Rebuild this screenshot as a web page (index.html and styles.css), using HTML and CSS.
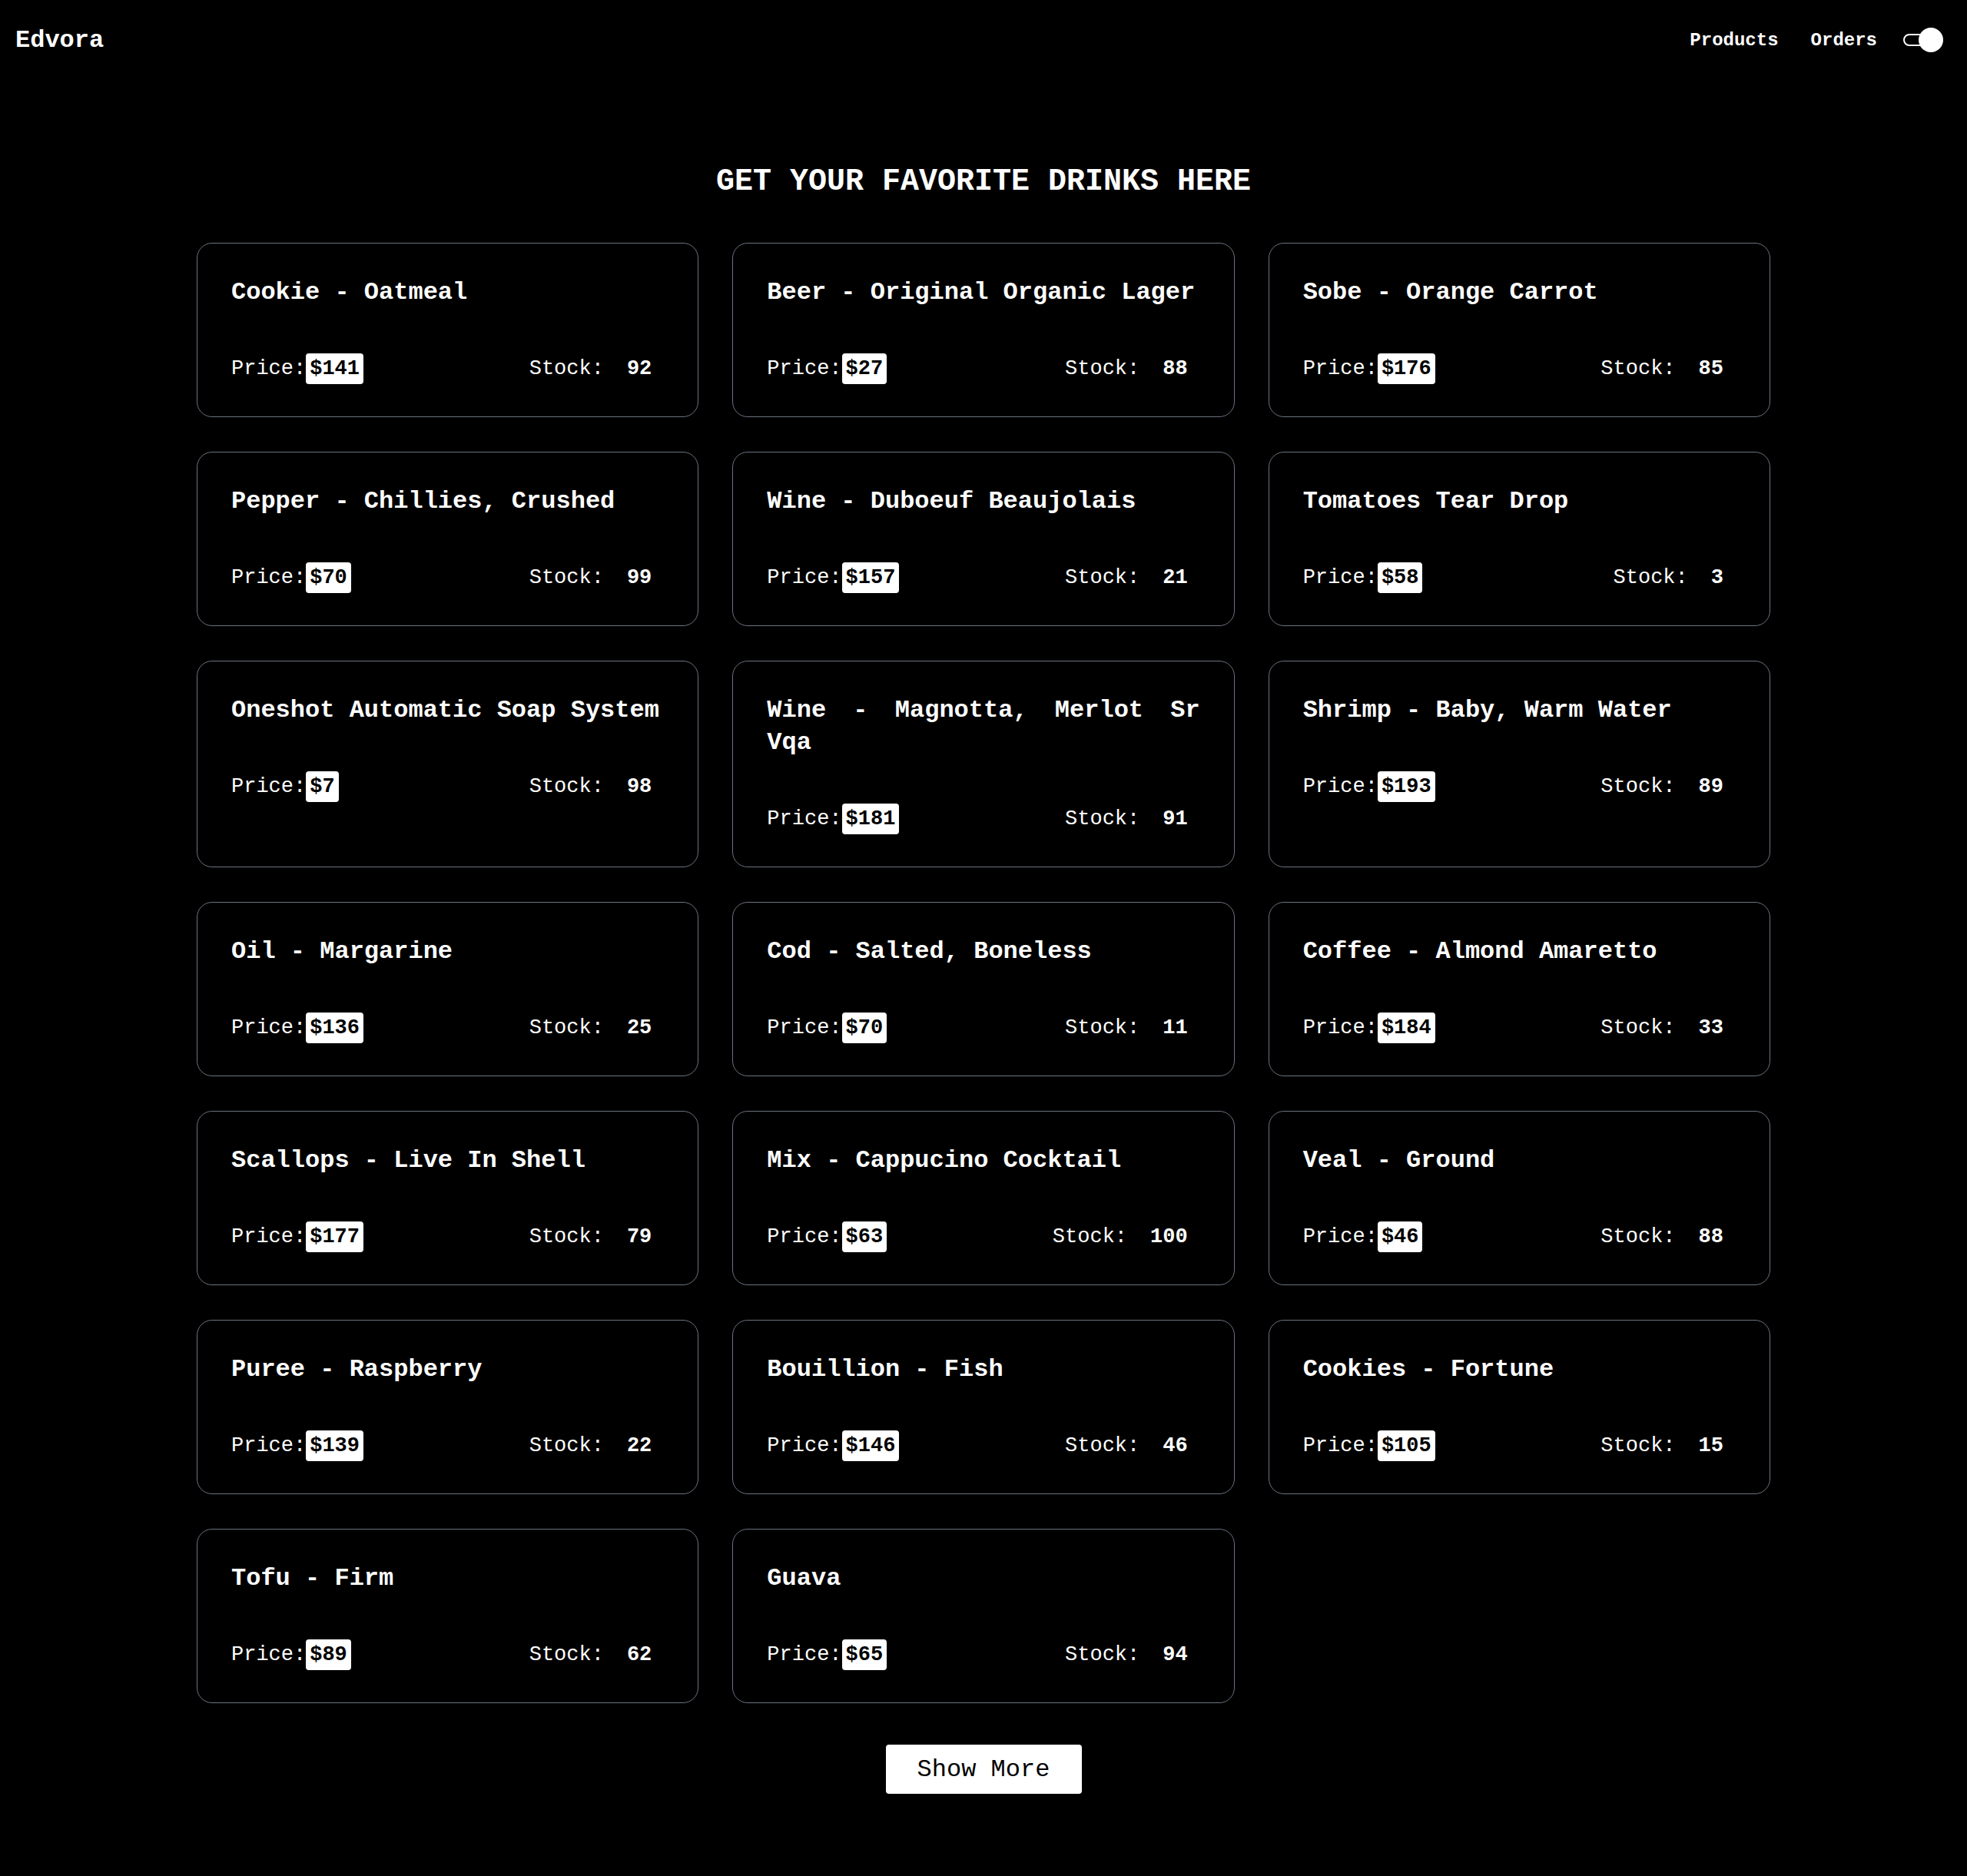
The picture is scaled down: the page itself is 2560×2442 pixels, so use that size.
FILE: index.html
```html
<!DOCTYPE html>
<html lang="en">
<head>
<meta charset="utf-8">
<title>Edvora</title>
<link rel="stylesheet" href="styles.css">
</head>
<body>
<header class="topbar">
  <div class="brand">Edvora</div>
  <nav class="nav">
    <a class="nav-link nav-products">Products</a>
    <a class="nav-link nav-orders">Orders</a>
    <svg class="toggle" width="52" height="32" viewBox="0 0 52 32">
      <rect x="1" y="9" width="40" height="14" rx="7" fill="none" stroke="#fff" stroke-width="2"/>
      <circle cx="36" cy="16" r="16" fill="#fff"/>
    </svg>
  </nav>
</header>

<main class="main">
  <h1 class="page-title">GET YOUR FAVORITE DRINKS HERE</h1>
  <section class="grid">
    <article class="card"><h2 class="card-title">Cookie - Oatmeal</h2><div class="card-row"><div class="price">Price:<span class="badge">$141</span></div><div class="stock">Stock:<span class="stock-val">92</span></div></div></article>
    <article class="card"><h2 class="card-title">Beer - Original Organic Lager</h2><div class="card-row"><div class="price">Price:<span class="badge">$27</span></div><div class="stock">Stock:<span class="stock-val">88</span></div></div></article>
    <article class="card"><h2 class="card-title">Sobe - Orange Carrot</h2><div class="card-row"><div class="price">Price:<span class="badge">$176</span></div><div class="stock">Stock:<span class="stock-val">85</span></div></div></article>
    <article class="card"><h2 class="card-title">Pepper - Chillies, Crushed</h2><div class="card-row"><div class="price">Price:<span class="badge">$70</span></div><div class="stock">Stock:<span class="stock-val">99</span></div></div></article>
    <article class="card"><h2 class="card-title">Wine - Duboeuf Beaujolais</h2><div class="card-row"><div class="price">Price:<span class="badge">$157</span></div><div class="stock">Stock:<span class="stock-val">21</span></div></div></article>
    <article class="card"><h2 class="card-title">Tomatoes Tear Drop</h2><div class="card-row"><div class="price">Price:<span class="badge">$58</span></div><div class="stock">Stock:<span class="stock-val">3</span></div></div></article>
    <article class="card"><h2 class="card-title">Oneshot Automatic Soap System</h2><div class="card-row"><div class="price">Price:<span class="badge">$7</span></div><div class="stock">Stock:<span class="stock-val">98</span></div></div></article>
    <article class="card"><h2 class="card-title">Wine - Magnotta, Merlot Sr Vqa</h2><div class="card-row"><div class="price">Price:<span class="badge">$181</span></div><div class="stock">Stock:<span class="stock-val">91</span></div></div></article>
    <article class="card"><h2 class="card-title">Shrimp - Baby, Warm Water</h2><div class="card-row"><div class="price">Price:<span class="badge">$193</span></div><div class="stock">Stock:<span class="stock-val">89</span></div></div></article>
    <article class="card"><h2 class="card-title">Oil - Margarine</h2><div class="card-row"><div class="price">Price:<span class="badge">$136</span></div><div class="stock">Stock:<span class="stock-val">25</span></div></div></article>
    <article class="card"><h2 class="card-title">Cod - Salted, Boneless</h2><div class="card-row"><div class="price">Price:<span class="badge">$70</span></div><div class="stock">Stock:<span class="stock-val">11</span></div></div></article>
    <article class="card"><h2 class="card-title">Coffee - Almond Amaretto</h2><div class="card-row"><div class="price">Price:<span class="badge">$184</span></div><div class="stock">Stock:<span class="stock-val">33</span></div></div></article>
    <article class="card"><h2 class="card-title">Scallops - Live In Shell</h2><div class="card-row"><div class="price">Price:<span class="badge">$177</span></div><div class="stock">Stock:<span class="stock-val">79</span></div></div></article>
    <article class="card"><h2 class="card-title">Mix - Cappucino Cocktail</h2><div class="card-row"><div class="price">Price:<span class="badge">$63</span></div><div class="stock">Stock:<span class="stock-val">100</span></div></div></article>
    <article class="card"><h2 class="card-title">Veal - Ground</h2><div class="card-row"><div class="price">Price:<span class="badge">$46</span></div><div class="stock">Stock:<span class="stock-val">88</span></div></div></article>
    <article class="card"><h2 class="card-title">Puree - Raspberry</h2><div class="card-row"><div class="price">Price:<span class="badge">$139</span></div><div class="stock">Stock:<span class="stock-val">22</span></div></div></article>
    <article class="card"><h2 class="card-title">Bouillion - Fish</h2><div class="card-row"><div class="price">Price:<span class="badge">$146</span></div><div class="stock">Stock:<span class="stock-val">46</span></div></div></article>
    <article class="card"><h2 class="card-title">Cookies - Fortune</h2><div class="card-row"><div class="price">Price:<span class="badge">$105</span></div><div class="stock">Stock:<span class="stock-val">15</span></div></div></article>
    <article class="card"><h2 class="card-title">Tofu - Firm</h2><div class="card-row"><div class="price">Price:<span class="badge">$89</span></div><div class="stock">Stock:<span class="stock-val">62</span></div></div></article>
    <article class="card"><h2 class="card-title">Guava</h2><div class="card-row"><div class="price">Price:<span class="badge">$65</span></div><div class="stock">Stock:<span class="stock-val">94</span></div></div></article>
  </section>
  <button class="show-more" type="button">Show More</button>
</main>
</body>
</html>
```

FILE: styles.css
```css
* {
  box-sizing: border-box;
}

html, body {
  margin: 0;
  padding: 0;
  background: #000;
}

body {
  min-height: 2442px;
  color: #fff;
  font-family: "Courier New", "Liberation Mono", monospace;
}

.topbar {
  height: 102px;
  display: flex;
  align-items: center;
  justify-content: space-between;
  padding: 3px 31px 0 20px;
}

.brand {
  font-size: 32px;
  font-weight: 700;
}

.nav {
  display: flex;
  align-items: center;
}

.nav-link {
  font-size: 24px;
  font-weight: 700;
  color: #fff;
  text-decoration: none;
}

.nav-products {
  margin-right: 42px;
}

.nav-orders {
  margin-right: 34px;
}

.toggle {
  display: block;
  margin-top: -1px;
}

.main {
  display: flex;
  flex-direction: column;
  align-items: center;
}

.page-title {
  margin: 112px 0 57px;
  font-size: 40px;
  font-weight: 700;
  line-height: normal;
  text-align: center;
}

.grid {
  width: 2048px;
  display: grid;
  grid-template-columns: repeat(3, 1fr);
  column-gap: 44px;
  row-gap: 45px;
}

.card {
  border: 1px solid #6b7280;
  border-radius: 20px;
  padding: 43px 44px 42px;
}

.card-title {
  margin: 0 0 57px;
  font-size: 32px;
  font-weight: 700;
  line-height: 42px;
  text-align: justify;
}

.card-row {
  display: flex;
  align-items: center;
  justify-content: space-between;
  height: 41px;
  padding-right: 16px;
  font-size: 27px;
}

.price,
.stock {
  display: flex;
  align-items: center;
}

.badge {
  background: #fff;
  color: #000;
  font-weight: 700;
  padding: 5px;
  border-radius: 4px;
  line-height: normal;
}

.stock-val {
  margin-left: 30px;
  font-weight: 700;
}

.show-more {
  margin: 54px 0 107px;
  width: 255px;
  height: 64px;
  border: none;
  border-radius: 4px;
  background: #fff;
  color: #000;
  font-family: "Courier New", "Liberation Mono", monospace;
  font-size: 32px;
  font-weight: 400;
  padding: 0;
  cursor: pointer;
}
```
